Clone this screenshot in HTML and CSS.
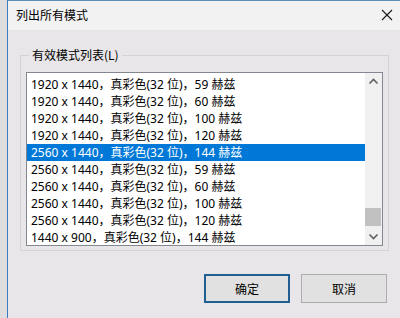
FILE: index.html
```html
<!DOCTYPE html>
<html lang="zh-CN">

<head>
    <meta charset="UTF-8">
    <meta name="viewport" content="width=device-width, initial-scale=1.0">
    <title>列出所有模式</title>

    <!-- CSS Styles -->
    <link rel="stylesheet" href="styles.css">
</head>

<body>
    <div class="window">
        <!-- Title bar -->
        <div class="titlebar">
            <span class="title">列出所有模式</span>
            <svg class="close" width="12" height="12" viewBox="0 0 12 12">
                <path d="M1 1 L11 11 M11 1 L1 11" stroke="#1a1a1a" stroke-width="1.1" fill="none"/>
            </svg>
        </div>

        <div class="content">
            <fieldset class="group">
                <legend>有效模式列表(L)</legend>

                <div class="listbox">
                    <ul class="rows">
                        <li>1920 x 1440，真彩色(32 位)，59 赫兹</li>
                        <li>1920 x 1440，真彩色(32 位)，60 赫兹</li>
                        <li>1920 x 1440，真彩色(32 位)，100 赫兹</li>
                        <li>1920 x 1440，真彩色(32 位)，120 赫兹</li>
                        <li class="selected">2560 x 1440，真彩色(32 位)，144 赫兹</li>
                        <li>2560 x 1440，真彩色(32 位)，59 赫兹</li>
                        <li>2560 x 1440，真彩色(32 位)，60 赫兹</li>
                        <li>2560 x 1440，真彩色(32 位)，100 赫兹</li>
                        <li>2560 x 1440，真彩色(32 位)，120 赫兹</li>
                        <li>1440 x 900，真彩色(32 位)，144 赫兹</li>
                    </ul>

                    <!-- Vertical scrollbar -->
                    <div class="scrollbar">
                        <svg class="arrow" width="17" height="17" viewBox="0 0 17 17">
                            <polyline points="4.5,10.5 8.5,6.5 12.5,10.5" stroke="#606060" stroke-width="1.6" fill="none"/>
                        </svg>
                        <div class="track">
                            <div class="thumb"></div>
                        </div>
                        <svg class="arrow" width="17" height="17" viewBox="0 0 17 17">
                            <polyline points="4.5,6.5 8.5,10.5 12.5,6.5" stroke="#606060" stroke-width="1.6" fill="none"/>
                        </svg>
                    </div>
                </div>
            </fieldset>

            <div class="buttons">
                <button class="btn default">确定</button>
                <button class="btn">取消</button>
            </div>
        </div>
    </div>
</body>

</html>
```

FILE: styles.css
```css
/* Colours of the dialog */
:root {
    --desk-color: #dedede;
    --frame-color: #3a7cc0;
    --title-bg: #f2f2f2;
    --face-color: #e8e6e8;
    --group-line: #d4d2d4;
    --list-border: #828790;
    --select-color: #0078d7;
    --btn-bg: #e1e1e1;
}

body {
    margin: 0;
    padding: 0 0 0 7px;
    background: var(--desk-color);
    font-family: "Noto Sans CJK SC", "Noto Sans", sans-serif;
    font-size: 12px;
    color: #000000;
    height: 318px;
    overflow: hidden;
}

.window {
    height: 318px;
    border-left: 1px solid var(--frame-color);
    border-top: 1px solid #5b93b8;
    background: var(--face-color);
    box-sizing: border-box;
}

/* Title bar */
.titlebar {
    height: 29px;
    background: var(--title-bg);
    display: flex;
    align-items: center;
    justify-content: space-between;
    padding: 0 7px 0 8px;
}

.title {
    font-size: 12px;
    margin-top: -2px;
}

.close {
    margin-top: -1px;
}

.content {
    padding: 18px 11px 0 12px;
}

/* Group box */
.group {
    margin: 0;
    padding: 10px 5px 4px 5px;
    border: 1px solid var(--group-line);
    border-radius: 0;
}

.group legend {
    margin-left: 3px;
    padding: 0 3px;
    line-height: 14px;
}

/* List box */
.listbox {
    display: flex;
    height: 174px;
    box-sizing: border-box;
    border: 1px solid var(--list-border);
    background: #ffffff;
}

.rows {
    flex: 1;
    list-style: none;
    margin: 0;
    padding: 3px 0 0 0;
    font-family: "Noto Sans", "Noto Sans CJK SC", sans-serif;
}

.rows li {
    height: 17px;
    line-height: 17px;
    padding-left: 4px;
    white-space: nowrap;
}

.rows li.selected {
    background: var(--select-color);
    color: #ffffff;
}

.scrollbar {
    width: 17px;
    display: flex;
    flex-direction: column;
    background: #f0f0f0;
}

.arrow {
    display: block;
}

.track {
    flex: 1;
    position: relative;
}

.thumb {
    position: absolute;
    top: 118px;
    left: 0;
    width: 16px;
    height: 18px;
    background: #c1c1c1;
}

/* Buttons */
.buttons {
    display: flex;
    justify-content: flex-end;
    gap: 11px;
    margin-top: 23px;
    padding-right: 2px;
}

.btn {
    width: 86px;
    height: 29px;
    font-family: inherit;
    font-size: 12px;
    background: var(--btn-bg);
    border: 1px solid #adadad;
    color: #000000;
    padding: 0;
}

.btn.default {
    border: 2px solid #1f5f91;
}
```
